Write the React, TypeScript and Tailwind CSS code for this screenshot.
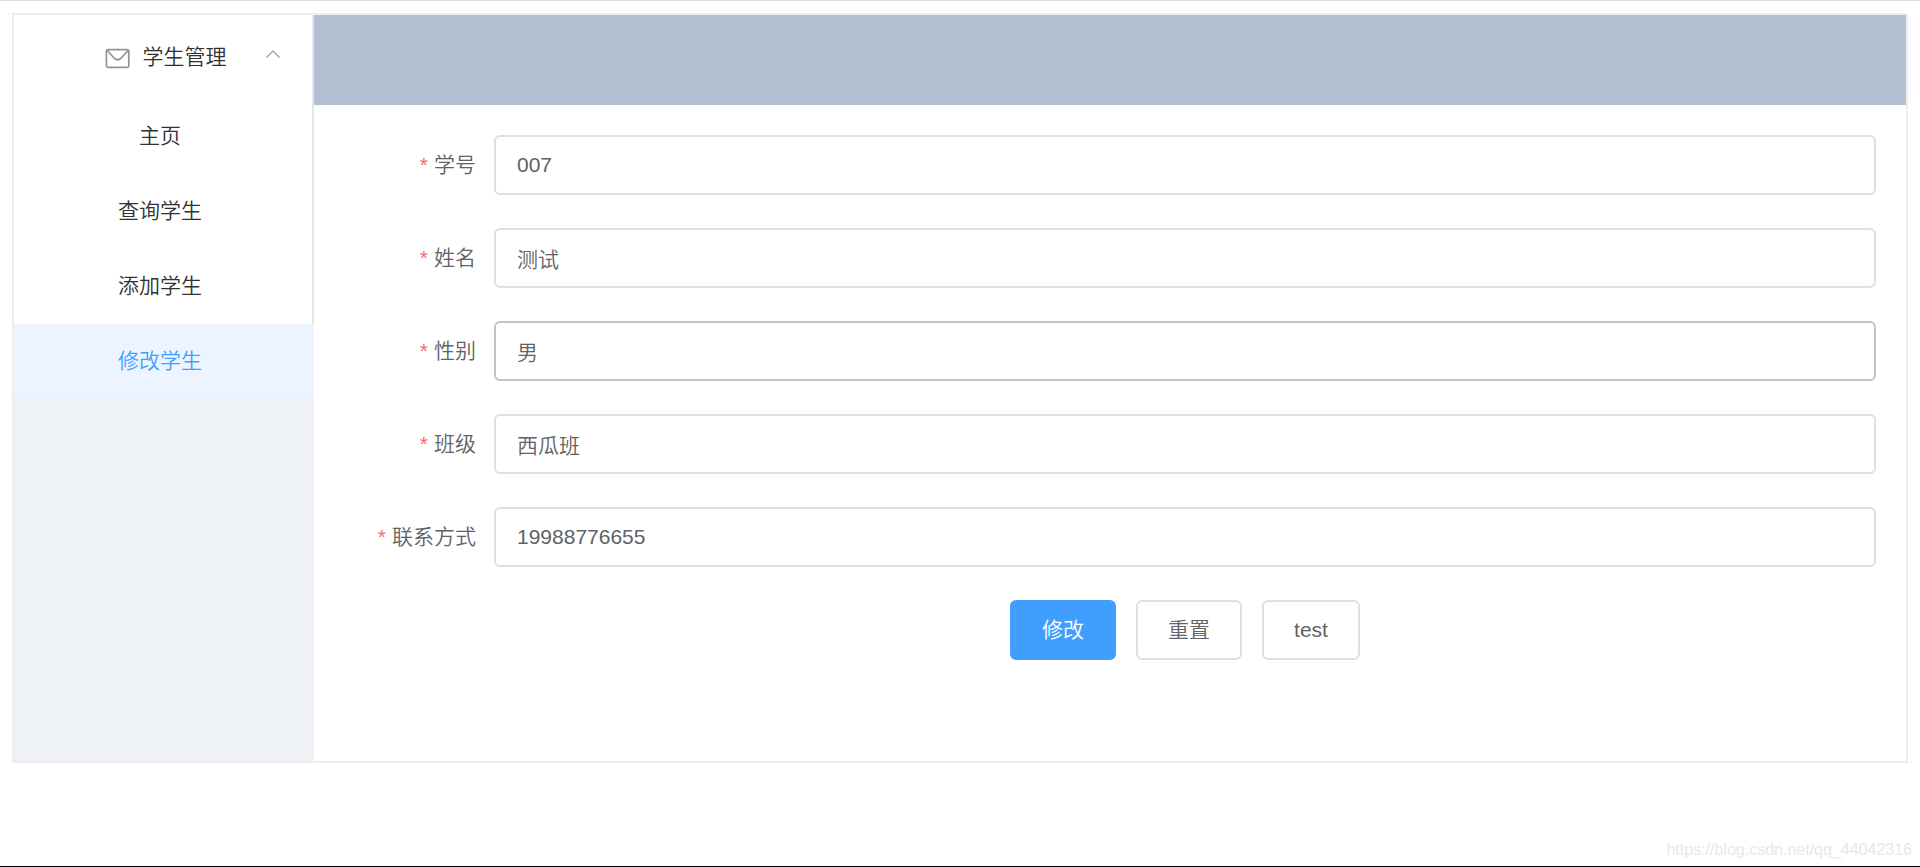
import { useState } from "react";
import clsx from "clsx";

const menuItems = ["主页", "查询学生", "添加学生", "修改学生"];

const fields = [
  { id: "sno", label: "学号", value: "007" },
  { id: "name", label: "姓名", value: "测试" },
  { id: "gender", label: "性别", value: "男", hovered: true },
  { id: "class", label: "班级", value: "西瓜班" },
  { id: "phone", label: "联系方式", value: "19988776655" },
];

const initialForm = Object.fromEntries(fields.map((f) => [f.id, f.value]));

function MessageIcon() {
  return (
    <svg
      viewBox="0 0 36 36"
      className="h-9 w-9 shrink-0"
      fill="none"
      stroke="#909399"
      strokeWidth="1.7"
      aria-hidden="true"
    >
      <rect x="6.4" y="10.6" width="22.4" height="17.8" rx="1.6" />
      <path d="M6.9 11 L14.2 19.2 Q17.6 22.6 21 19.2 L28.3 11" />
    </svg>
  );
}

function ArrowUpIcon() {
  return (
    <svg
      viewBox="0 0 18 18"
      className="h-[18px] w-[18px]"
      fill="none"
      stroke="#909399"
      strokeWidth="1.1"
      aria-hidden="true"
    >
      <path d="M2.5 12.5 L9 6 L15.5 12.5" />
    </svg>
  );
}

function Sidebar() {
  const [active, setActive] = useState("修改学生");
  const [open, setOpen] = useState(true);

  return (
    <aside className="w-[300px] shrink-0 bg-[#eef1f6] text-[#303133]">
      <nav>
        <button
          type="button"
          onClick={() => setOpen(!open)}
          className="grid h-[84px] w-full grid-cols-[1fr_auto_1fr] items-center border-r-2 border-[#e6e6e6] bg-white px-[30px]"
        >
          <span className="col-start-2 flex items-center gap-[7px]">
            <MessageIcon />
            <span className="pb-px">学生管理</span>
          </span>
          <span className={clsx("justify-self-end pb-[6px]", !open && "rotate-180")}>
            <ArrowUpIcon />
          </span>
        </button>
        {open && (
          <ul>
            {menuItems.map((item) => (
              <li key={item}>
                <a
                  href="#"
                  onClick={() => setActive(item)}
                  className={clsx(
                    "block h-[75px] border-r-2 pl-[60px] pr-[66px] text-center leading-[74px]",
                    item === active
                      ? "border-[#ecf5ff] bg-[#ecf5ff] text-[#409eff]"
                      : "border-[#e6e6e6] bg-white"
                  )}
                >
                  {item}
                </a>
              </li>
            ))}
          </ul>
        )}
      </nav>
    </aside>
  );
}

function StudentForm() {
  const [form, setForm] = useState(initialForm);
  const plainButton =
    "h-[60px] rounded-md border-2 border-[#dcdfe6] bg-white px-[30px] text-[#606266]";

  return (
    <form
      onSubmit={(e) => e.preventDefault()}
      className="flex flex-col gap-[33px] text-[#606266]"
    >
      {fields.map((f) => (
        <div key={f.id} className="flex">
          <label
            htmlFor={f.id}
            className="w-[150px] shrink-0 pr-[18px] text-right leading-[60px]"
          >
            <span className="mr-[6px] text-[#f56c6c]">*</span>
            {f.label}
          </label>
          <input
            id={f.id}
            type="text"
            value={form[f.id]}
            onChange={(e) => setForm({ ...form, [f.id]: e.target.value })}
            className={clsx(
              "h-[60px] min-w-0 flex-1 rounded-md border-2 bg-white px-[21px] outline-none",
              f.hovered ? "border-[#c0c4cc]" : "border-[#dcdfe6]"
            )}
          />
        </div>
      ))}
      <div className="flex justify-center gap-5 pl-[150px]">
        <button
          type="submit"
          className="h-[60px] rounded-md border-2 border-[#409eff] bg-[#409eff] px-[30px] text-white"
        >
          修改
        </button>
        <button type="button" onClick={() => setForm(initialForm)} className={plainButton}>
          重置
        </button>
        <button type="button" className={plainButton}>
          test
        </button>
      </div>
    </form>
  );
}

export default function App() {
  return (
    <div className="flex min-h-screen flex-col border-t border-b border-t-[#dcdde0] border-b-black bg-white font-['Liberation_Sans','Noto_Sans_CJK_SC',sans-serif] text-[21px] font-[350]">
      <div className="mx-3 mt-3 flex min-h-[750px] border-2 border-[#eee]">
        <Sidebar />
        <div className="min-w-0 flex-1">
          <header className="h-[90px] bg-[#b3c0d1]" />
          <main className="p-[30px]">
            <StudentForm />
          </main>
        </div>
      </div>
      <footer className="mt-auto px-2 pb-1 text-right text-base text-[#e8e8e8]">
        https://blog.csdn.net/qq_44042316
      </footer>
    </div>
  );
}
